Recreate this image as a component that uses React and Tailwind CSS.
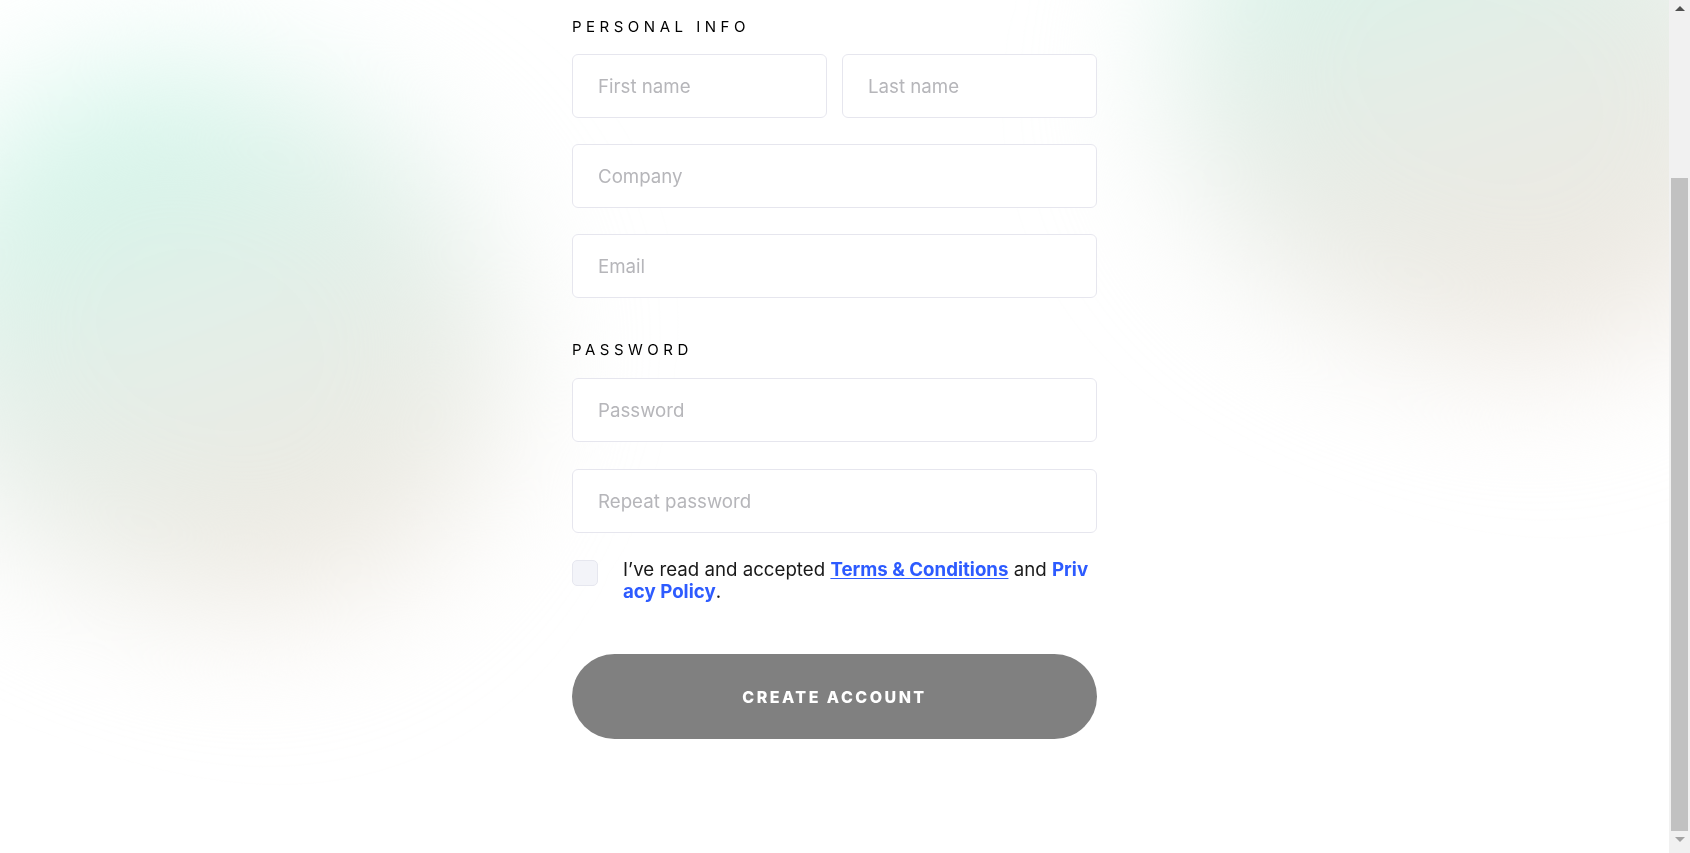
import { useLayoutEffect } from "react";

const inputCls =
  "h-16 w-full rounded-md border border-[#e6e6ee] bg-white px-[25px] text-[18.7px] text-gray-800 placeholder:text-[#b6b6ba] outline-none";

function Field({ placeholder, type = "text" }) {
  return <input type={type} placeholder={placeholder} className={inputCls} />;
}

function Scrollbar() {
  return (
    <div className="fixed right-0 top-0 flex h-screen w-[21px] flex-col items-center bg-[#f1f1f1]">
      <div className="flex h-[17px] w-full items-center justify-center">
        <span className="h-0 w-0 border-x-[5px] border-b-[5px] border-x-transparent border-b-[#505050]" />
      </div>
      <div className="mt-[161px] h-[653px] w-[17px] bg-[#c1c1c1]" />
      <div className="flex h-[17px] w-full items-center justify-center">
        <span className="h-0 w-0 border-x-[5px] border-t-[5px] border-x-transparent border-t-[#a3a3a3]" />
      </div>
    </div>
  );
}

export default function App() {
  // la captura está hecha con la página desplazada hasta abajo
  useLayoutEffect(() => {
    window.scrollTo(0, document.documentElement.scrollHeight);
  }, []);

  return (
    <div className="relative min-h-[1070px] bg-white pr-[21px] font-['Inter',sans-serif] text-black">
      {/* manchas difuminadas del fondo */}
      <div className="pointer-events-none fixed inset-0 overflow-hidden">
        <div className="absolute left-[-90px] top-[80px] h-[520px] w-[600px] rotate-[20deg] rounded-full bg-gradient-to-br from-[#c6faeb] via-[#e5eee8] to-[#f3e6dd] blur-[70px]" />
        <div className="absolute left-[1170px] top-[-170px] h-[520px] w-[620px] rotate-[20deg] rounded-full bg-gradient-to-br from-[#caf9ec] via-[#e7ece6] to-[#f3e7df] blur-[70px]" />
      </div>

      <main className="relative mx-auto w-[525px] pb-[114px]">
        <header className="flex h-[234px] flex-col justify-end pb-[40px]">
          <h1 className="text-[34px] font-bold">Create your account</h1>
        </header>

        <h2 className="mb-[17px] text-[15px] leading-5 tracking-[0.3em]">PERSONAL INFO</h2>
        <div className="flex flex-col gap-[26px]">
          <div className="grid grid-cols-2 gap-[15px]">
            <Field placeholder="First name" />
            <Field placeholder="Last name" />
          </div>
          <Field placeholder="Company" />
          <Field placeholder="Email" type="email" />
        </div>

        <h2 className="mt-[42px] mb-[18px] text-[15px] leading-5 tracking-[0.3em]">PASSWORD</h2>
        <div className="flex flex-col gap-[27px]">
          <Field placeholder="Password" type="password" />
          <Field placeholder="Repeat password" type="password" />
        </div>

        <label className="mt-[25px] flex items-start gap-[25px]">
          <span className="mt-[2px] h-[26px] w-[26px] shrink-0 rounded-[5px] border border-[#e6e7ef] bg-[#f3f4f9]" />
          <span className="mt-[1px] break-all text-[18.7px] leading-[21.7px] text-[#1a1a1a]">
            I’ve read and accepted{" "}
            <a href="#" className="font-bold text-[#2d5bff] underline underline-offset-2">
              Terms &amp; Conditions
            </a>{" "}
            and{" "}
            <a href="#" className="font-bold text-[#2d5bff]">
              Privacy Policy
            </a>
            .
          </span>
        </label>

        <button className="mt-[52px] flex h-[85px] w-full items-center justify-center rounded-full bg-[#808080] text-[16px] font-extrabold tracking-[0.155em] text-white">
          CREATE ACCOUNT
        </button>
      </main>

      <Scrollbar />
    </div>
  );
}
